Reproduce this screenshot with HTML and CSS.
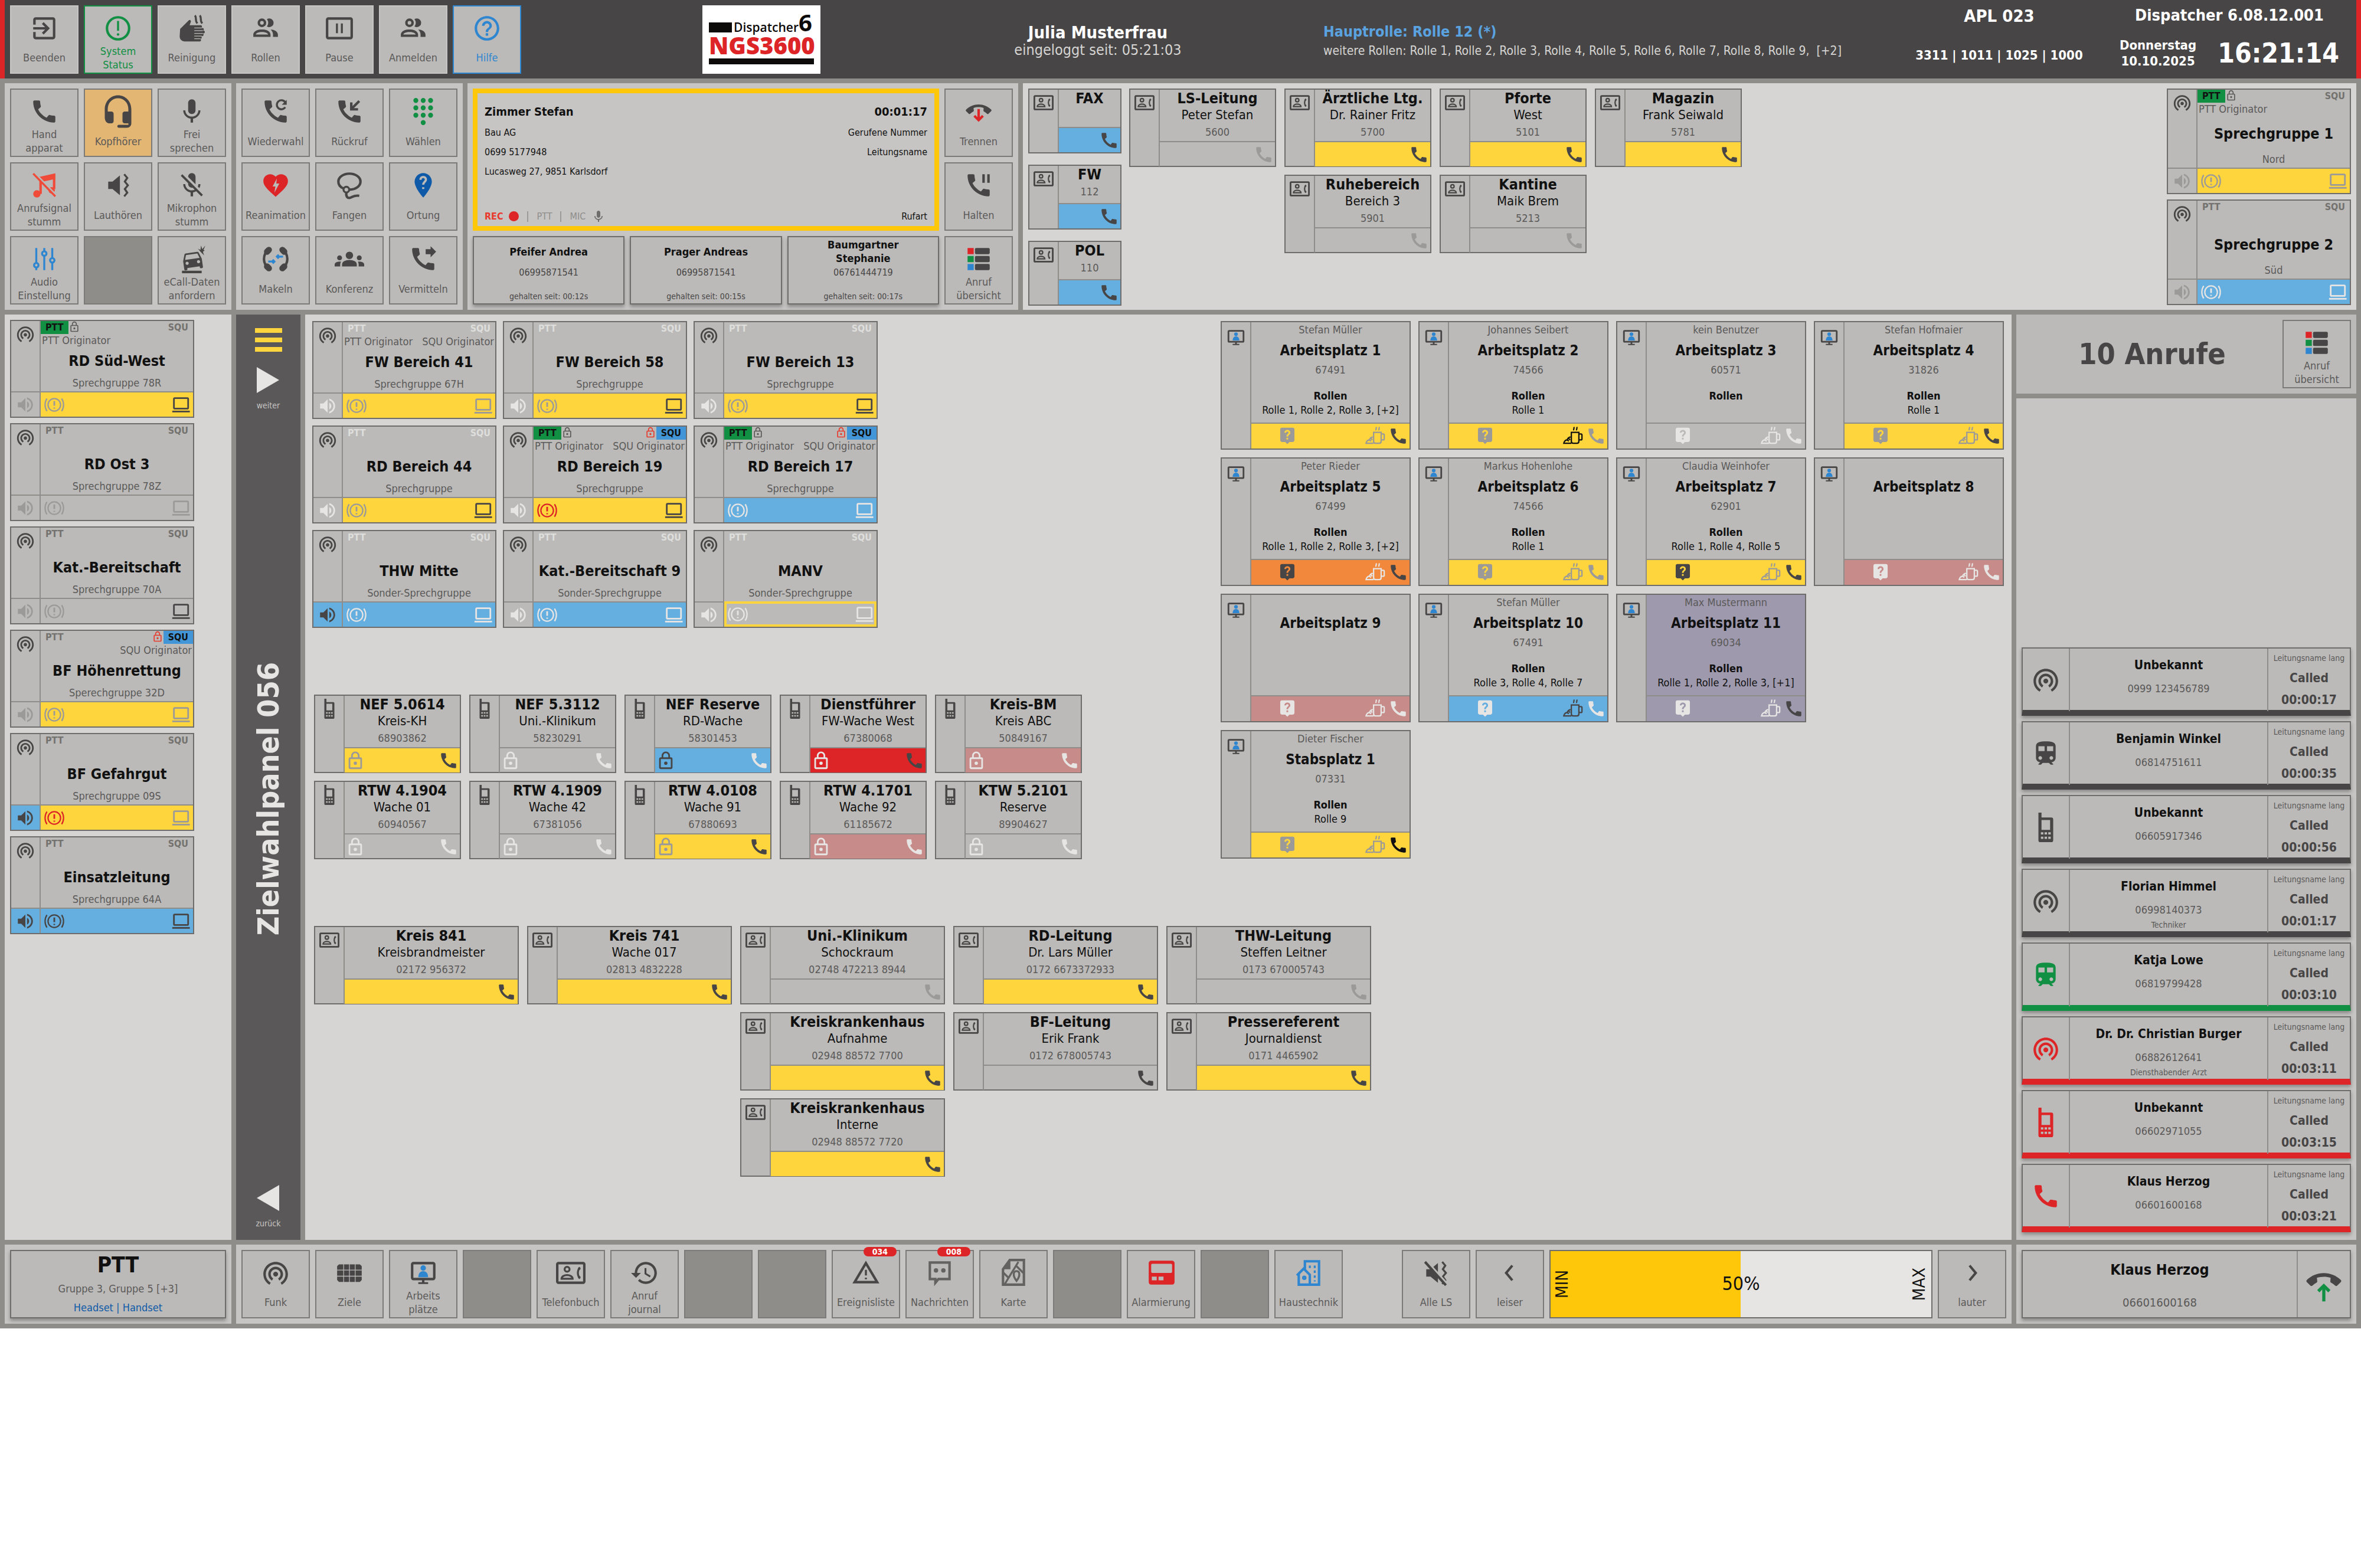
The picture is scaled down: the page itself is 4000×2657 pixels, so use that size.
FILE: index.html
```html
<!DOCTYPE html>
<html lang="de">
<head>
    <meta charset="utf-8">
    <title>Dispatcher NGS3600</title>
    <link rel="stylesheet" href="styles.css">
</head>
<body>
<!-- Symbole -->
<svg class="sprite" aria-hidden="true">
    <symbol id="i-exit" viewBox="0 0 24 24"><path d="M10.09 15.59L11.5 17l5-5-5-5-1.41 1.41L12.67 11H3v2h9.67l-2.58 2.59zM19 3H5c-1.11 0-2 .9-2 2v4h2V5h14v14H5v-4H3v4c0 1.1.89 2 2 2h14c1.1 0 2-.9 2-2V5c0-1.1-.9-2-2-2z"/></symbol>
    <symbol id="i-status" viewBox="0 0 24 24"><circle class="line" cx="12" cy="12" r="9"/><path class="line thin" d="M12 6v8"/><circle cx="12" cy="17" r="1"/></symbol>
    <symbol id="i-wash" viewBox="0 0 24 24"><path d="M2.5 12.5L9.500 5.500c.9-.8 2 .1 1.700 1.200L10.200 9.500h9a1.100 1.100 0 0 1 0 2.200h1.500a1.100 1.100 0 0 1 0 2.200h.8a1.100 1.100 0 0 1 0 2.200h-1a1.100 1.100 0 0 1 0 2.200h-1.500a1.100 1.100 0 0 1 0 2.200h-.6a1.100 1.100 0 0 1 0 2.200H6a4 4 0 0 1-3.900-4z"/><path class="gap" d="M14 11.700h6M14 13.900h7M14 16.100h7M14 18.300h6M14 20.500h5"/><path class="line thin" d="M14.500 1.500c2 2.500-.5 3.500 2 6.500M18.500 1.500c2 2.500-.5 3.500 2 6.500"/></symbol>
    <symbol id="i-people" viewBox="0 0 24 24"><path d="M13.070 10.410A5 5 0 0 0 13.070 4.590A3.390 3.390 0 0 1 15 4A3.500 3.500 0 0 1 15 11A3.390 3.390 0 0 1 13.070 10.410M5.500 7.500A3.500 3.500 0 1 1 9 11A3.500 3.500 0 0 1 5.500 7.500M7.500 7.500A1.500 1.500 0 1 0 9 6A1.500 1.500 0 0 0 7.500 7.500M16 17V19H2V17S2 13 9 13 16 17 16 17M14 17C13.860 16.220 12.670 15 9 15S4.070 16.310 4 17M15.950 13A5.320 5.320 0 0 1 18 17V19H22V17S22 13.370 15.940 13Z"/></symbol>
    <symbol id="i-pause" viewBox="0 0 24 24"><rect class="line" x="2" y="4" width="20" height="16" rx="1"/><path class="line thin" d="M10 8v8M14 8v8"/></symbol>
    <symbol id="i-help" viewBox="0 0 24 24"><path d="M11 18h2v-2h-2v2zm1-16C6.480 2 2 6.480 2 12s4.480 10 10 10 10-4.480 10-10S17.520 2 12 2zm0 18c-4.410 0-8-3.590-8-8s3.590-8 8-8 8 3.590 8 8-3.590 8-8 8zm0-14c-2.210 0-4 1.790-4 4h2c0-1.100.9-2 2-2s2 .9 2 2c0 2-3 1.750-3 5h2c0-2.250 3-2.500 3-5 0-2.210-1.790-4-4-4z"/></symbol>
    <symbol id="i-phone" viewBox="0 0 24 24"><path id="handset" d="M20.010 15.380c-1.230 0-2.420-.2-3.530-.56-.35-.12-.74-.03-1.010.24l-1.570 1.970c-2.830-1.350-5.480-3.900-6.890-6.830l1.950-1.660c.27-.28.35-.67.24-1.020-.37-1.110-.56-2.300-.56-3.530 0-.54-.45-.99-.99-.99H4.190C3.650 3 3 3.240 3 3.990 3 13.280 10.730 21 20.010 21c.71 0 .99-.63.99-1.180v-3.450c0-.54-.45-.99-.99-.99z"/></symbol>
    <symbol id="i-headset" viewBox="0 0 24 24"><path d="M12 1C7 1 3 5 3 10.500V16c0 2.300 1.300 4 3 4h1.500c.9 0 1.500-.7 1.500-1.500V13.500c0-.9-.7-1.500-1.500-1.500H5v-1.500C5 6 8.100 3 12 3s7 3 7 7.500V12h-2.500c-.9 0-1.500.7-1.500 1.500v5c0 .9.7 1.500 1.500 1.500H19v1h-6.500c-.6 0-1 .4-1 1s.4 1 1 1H18c1.700 0 3-1.300 3-3v-9.500C21 5 17 1 12 1z"/></symbol>
    <symbol id="i-mic" viewBox="0 0 24 24"><path d="M12 14c1.660 0 2.990-1.340 2.990-3L15 5c0-1.660-1.340-3-3-3S9 3.340 9 5v6c0 1.660 1.340 3 3 3zm5.300-3c0 3-2.540 5.100-5.300 5.100S6.700 14 6.700 11H5c0 3.410 2.720 6.230 6 6.720V21h2v-3.280c3.280-.48 6-3.300 6-6.720h-1.700z"/></symbol>
    <symbol id="i-micoff" viewBox="0 0 24 24"><path d="M19 11c0 1.190-.34 2.300-.9 3.280l-1.230-1.230c.27-.62.43-1.310.43-2.050H19m-4 .16L9 5.180V5a3 3 0 0 1 3-3 3 3 0 0 1 3 3v6.160M4.270 3L21 19.730 19.730 21l-4.190-4.190c-.77.46-1.630.77-2.540.91V21h-2v-3.280c-3.280-.49-6-3.310-6-6.720h1.700c0 3 2.540 5.100 5.300 5.100.81 0 1.600-.19 2.310-.52l-1.660-1.660L12 14a3 3 0 0 1-3-3v-.72L3 4.270 4.270 3z"/></symbol>
    <symbol id="i-ringoff" viewBox="0 0 24 24"><path class="line" d="M9 19V6l11-2.500V15"/><path d="M9 5.200l11.800-2.700v4.300L9 9.500z"/><circle cx="6" cy="19" r="3"/><circle cx="18" cy="16" r="2.600"/><path class="gap wide" d="M4 2l18 18.500"/><path class="line thin" d="M3 2.500l18 18.500"/></symbol>
    <symbol id="i-loud" viewBox="0 0 24 24"><path d="M4 9v6h3.500l6 5V4l-6 5z"/><path class="line thin" d="M17 3l2.500 3-2 3 2.500 3-2.500 3 2 3-2.500 3"/></symbol>
    <symbol id="i-loudoff" viewBox="0 0 24 24"><path d="M4 9v6h3.500l6 5V4l-6 5z"/><path class="line thin" d="M17 3l2.500 3-2 3 2.500 3-2.500 3 2 3-2.500 3"/><path class="gap wide" d="M4 2l18 20"/><path class="line" d="M3 3l17 19"/></symbol>
    <symbol id="i-sliders" viewBox="0 0 24 24"><path class="line thin" d="M5.500 3v12.200M5.500 18.800V21M12 3v2.700M12 9.300V21M18.500 3v8.200M18.500 14.800V21"/><circle class="line thin" cx="5.500" cy="17" r="1.800"/><circle class="line thin" cx="12" cy="7.500" r="1.800"/><circle class="line thin" cx="18.500" cy="13" r="1.800"/></symbol>
    <symbol id="i-ecall" viewBox="0 0 24 24"><g transform="translate(1 4) rotate(-8) scale(.85)"><path d="M18.920 6.010C18.720 5.420 18.160 5 17.500 5h-11c-.66 0-1.210.42-1.420 1.010L3 12v8c0 .55.45 1 1 1h1c.55 0 1-.45 1-1v-1h12v1c0 .55.45 1 1 1h1c.55 0 1-.45 1-1v-8l-2.080-5.990zM6.500 16c-.83 0-1.500-.67-1.500-1.500S5.670 13 6.500 13s1.500.67 1.500 1.500S7.330 16 6.500 16zm11 0c-.83 0-1.500-.67-1.500-1.500s.67-1.500 1.500-1.500 1.500.67 1.500 1.500-.67 1.500-1.500 1.500zM5 11l1.500-4.500h11L19 11H5z"/></g><path class="line" d="M4 22.500h16"/><path d="M17 3.500l2 1 .5-3.500 1 3L23 1l-1.500 3.500 1 .5-1.500 1 1 3-3-3z"/></symbol>
    <symbol id="i-redial" viewBox="0 0 24 24"><use href="#handset"/><path class="line thin" d="M19.800 8.500a3.700 3.700 0 1 1 0-4"/><path d="M21 2.500v4h-4z"/></symbol>
    <symbol id="i-callback" viewBox="0 0 24 24"><use href="#handset"/><path class="line" d="M20 3.500l-6 6"/><path class="line" d="M13.500 4.500V10.200H19"/></symbol>
    <symbol id="i-dial" viewBox="0 0 24 24"><path class="dots" d="M6 3h0M12 3h0M18 3h0M6 9h0M12 9h0M18 9h0M6 15h0M12 15h0M18 15h0M12 21h0"/></symbol>
    <symbol id="i-heart" viewBox="0 0 24 24"><path d="M12 21.350l-1.450-1.320C5.400 15.360 2 12.280 2 8.500 2 5.420 4.420 3 7.500 3c1.740 0 3.410.81 4.500 2.090C13.090 3.810 14.760 3 16.500 3 19.580 3 22 5.420 22 8.500c0 3.780-3.400 6.860-8.550 11.540L12 21.350z"/><path class="cut" d="M13 6.500l-3.500 6.500h2.300l-.8 5 4-7.500h-2.500z"/></symbol>
    <symbol id="i-lasso" viewBox="0 0 24 24"><path class="line" d="M7 14.500C4.500 13.400 3 11.500 3 9c0-3.600 4-6.500 9-6.500S21 5.400 21 9s-4 6.500-9 6.500"/><circle class="line thin" cx="9.500" cy="15.500" r="2.300"/><path class="line" d="M9.500 18c-.5 3 1 5 3.500 4s3-2 7-1.500"/></symbol>
    <symbol id="i-place" viewBox="0 0 24 24"><path d="M12 2C8.130 2 5 5.130 5 9c0 5.250 7 13 7 13s7-7.750 7-13c0-3.870-3.130-7-7-7z"/><path class="gap wide" d="M9.800 7.500c0-3.200 4.600-3 4.400 0-.1 1.700-2.200 1.800-2.200 4M12 13.500v1.500"/></symbol>
    <symbol id="i-swap" viewBox="0 0 24 24"><path class="line" d="M7 4C1 8 1 16 7 20M17 4c6 4 6 12 0 16"/><path class="fat" d="M5 6l1.500-1.500M5 18l1.500 1.500M19 6l-1.500-1.500M19 18l-1.500 1.500"/><path class="blue-line" d="M18 10h-5M14.500 8.500L13 10l1.500 1.500M6 14h5M9.500 12.500L11 14l-1.500 1.500"/></symbol>
    <symbol id="i-group" viewBox="0 0 24 24"><path d="M12 12.750c1.630 0 3.070.39 4.240.9 1.080.48 1.760 1.560 1.760 2.730V18H6v-1.610c0-1.180.68-2.260 1.760-2.730 1.170-.52 2.610-.91 4.240-.91zM4 13c1.100 0 2-.9 2-2s-.9-2-2-2-2 .9-2 2 .9 2 2 2zm1.130 1.100c-.37-.06-.74-.1-1.130-.1-.99 0-1.930.21-2.780.58C.48 14.900 0 15.620 0 16.430V18h4.500v-1.610c0-.83.23-1.610.63-2.290zM20 13c1.100 0 2-.9 2-2s-.9-2-2-2-2 .9-2 2 .9 2 2 2zm4 3.430c0-.81-.48-1.530-1.220-1.850-.85-.37-1.790-.58-2.780-.58-.39 0-.76.04-1.130.1.4.68.63 1.460.63 2.290V18H24v-1.570zM12 6c1.660 0 3 1.340 3 3s-1.340 3-3 3-3-1.340-3-3 1.340-3 3-3z"/></symbol>
    <symbol id="i-forward" viewBox="0 0 24 24"><use href="#handset"/><path d="M18 10.500l4.500-4.500L18 1.500V4h-4v4h4z"/></symbol>
    <symbol id="i-hangup" viewBox="0 0 24 24"><use href="#handset" transform="translate(12 11) rotate(135) scale(.85) translate(-12 -12)"/><path class="red-line" d="M12 10v9M8.500 15.500l3.500 3.500 3.500-3.500"/></symbol>
    <symbol id="i-pickup" viewBox="0 0 24 24"><use href="#handset" transform="translate(12 10) rotate(135) scale(.9) translate(-12 -12)"/><path class="green-line" d="M12 23V13M8.500 16.500L12 13l3.500 3.500"/></symbol>
    <symbol id="i-hold" viewBox="0 0 24 24"><use href="#handset"/><path d="M15 3h2v7h-2zM19 3h2v7h-2z"/></symbol>
    <symbol id="i-list" viewBox="0 0 24 24"><rect class="f-red" x="3" y="3" width="5" height="5"/><rect class="f-green" x="3" y="9.500" width="5" height="5"/><rect class="f-blue" x="3" y="16" width="5" height="5"/><rect x="9" y="3" width="12" height="5" rx="1"/><rect x="9" y="9.500" width="12" height="5" rx="1"/><rect x="9" y="16" width="12" height="5" rx="1"/></symbol>
    <symbol id="i-contact" viewBox="0 0 24 24"><rect class="line" x="1" y="4" width="22" height="16" rx="1"/><circle class="line thin" cx="9" cy="9" r="2"/><path class="line thin" d="M4.500 16.700c0-2 2.500-3 4.500-3s4.500 1 4.500 3z"/><path class="line thin" d="M19.500 7.500c-2.300 2.500-2.300 6.500 0 9"/><path class="line" d="M19.300 8l-.8 1M19.300 16l-.8-1"/></symbol>
    <symbol id="i-radio" viewBox="0 0 24 24"><path d="M12 11c-1.100 0-2 .9-2 2s.9 2 2 2 2-.9 2-2-.9-2-2-2zm6 2c0-3.310-2.690-6-6-6s-6 2.690-6 6c0 2.220 1.210 4.150 3 5.190l1-1.740c-1.190-.7-2-1.970-2-3.450 0-2.210 1.790-4 4-4s4 1.790 4 4c0 1.480-.81 2.750-2 3.450l1 1.740c1.790-1.040 3-2.970 3-5.190zM12 3C6.480 3 2 7.480 2 13c0 3.700 2.010 6.920 4.990 8.650l1-1.730C5.610 18.530 4 15.960 4 13c0-4.420 3.580-8 8-8s8 3.580 8 8c0 2.960-1.610 5.530-4 6.920l1 1.730c2.990-1.730 5-4.950 5-8.650 0-5.520-4.480-10-10-10z"/></symbol>
    <symbol id="i-grid" viewBox="0 0 24 24"><path d="M3.500 5H7v4.300H2V6.500zM7.600 5h4.100v4.300H7.600zM12.300 5h4.100v4.300h-4.100zM17 5h3.500L22 6.500v2.800h-5zM2 10h5v4.300H2zM7.600 10h4.100v4.300H7.600zM12.300 10h4.100v4.300h-4.100zM17 10h5v4.300h-5zM2 15h5v4.300H3.500L2 17.800zM7.600 15h4.100v4.300H7.600zM12.300 15h4.100v4.300h-4.100zM17 15h5v2.800l-1.500 1.500H17z"/></symbol>
    <symbol id="i-desk" viewBox="0 0 24 24"><rect class="line" x="3" y="4" width="18" height="13" rx="1"/><path d="M11 17h2v2.500h3V21H8v-1.500h3z"/><circle class="f-blue" cx="12" cy="8" r="2.200"/><path class="f-blue" d="M8 15.500c0-3 1.500-5 4-5s4 2 4 5z"/></symbol>
    <symbol id="i-history" viewBox="0 0 24 24"><path d="M13 3c-4.970 0-9 4.030-9 9H1l3.890 3.890.07.14L9 12H6c0-3.870 3.130-7 7-7s7 3.130 7 7-3.130 7-7 7c-1.930 0-3.680-.79-4.940-2.060l-1.420 1.420C8.270 19.990 10.510 21 13 21c4.970 0 9-4.030 9-9s-4.030-9-9-9zm-1 5v5l4.280 2.540.72-1.210-3.500-2.080V8H12z"/></symbol>
    <symbol id="i-warn" viewBox="0 0 24 24"><path class="line" d="M12 4L2.800 19.500h18.400z"/><path class="line thin" d="M12 9.500v4.500M12 15.800v1.400"/></symbol>
    <symbol id="i-chat" viewBox="0 0 24 24"><path class="line" d="M4 3.500h16V17h-9l-2.500 3v-3H4z"/><circle cx="9" cy="10" r="1.800"/><circle cx="15" cy="10" r="1.800"/></symbol>
    <symbol id="i-map" viewBox="0 0 24 24"><path class="line" d="M9 1.500h11.500v20H3.500V9z"/><path d="M9.500 1v8H3z"/><path class="line thin" d="M4 12l4 4-3 5M8 16l8-13M14 6l6 6"/><path class="line thin" d="M14.500 18.500c-3.500-4.500-2.500-8 0-8s3.500 3.500 0 8z"/></symbol>
    <symbol id="i-pager" viewBox="0 0 24 24"><path d="M4 2h17c1.100 0 2 .9 2 2v15.500c0 1.100-.9 2-2 2H4c-1.100 0-2-.9-2-2V4c0-1.100.9-2 2-2z"/><rect class="cut" x="4" y="4.500" width="17" height="7.500" rx="1"/><path class="cut" d="M4.500 15h4v3h-4zM10 15h4v3h-4z"/></symbol>
    <symbol id="i-house" viewBox="0 0 24 24"><path class="line" d="M9 10V2.500h11.500v19H4V12.500L2.500 14 8 8.500l5 5V21"/><path class="line thin dash" d="M13 6v3M17 6v13"/><circle class="line thin" cx="8.500" cy="16" r="1"/></symbol>
    <symbol id="i-left" viewBox="0 0 24 24"><path class="line" d="M14 6l-5 6 5 6"/></symbol>
    <symbol id="i-right" viewBox="0 0 24 24"><path class="line" d="M10 6l5 6-5 6"/></symbol>
    <symbol id="i-volume" viewBox="0 0 24 24"><path d="M3 9v6h4l5 5V4L7 9H3zm13.500 3c0-1.770-1.020-3.290-2.500-4.030v8.050c1.480-.73 2.500-2.250 2.500-4.020zM14 3.230v2.060c2.890.86 5 3.540 5 6.710s-2.110 5.850-5 6.710v2.060c4.010-.91 7-4.490 7-8.770s-2.990-7.860-7-8.770z"/></symbol>
    <symbol id="i-alarm" viewBox="0 0 24 24"><circle class="line thin" cx="12" cy="12" r="7.500"/><path class="line" d="M12 7.500v5.500M12 15.200v1.300"/><path class="line thin" d="M3.200 4.500c-3 4.500-3 10.500 0 15M20.800 4.500c3 4.500 3 10.500 0 15"/></symbol>
    <symbol id="i-laptop" viewBox="0 0 24 24"><rect class="line" x="4" y="4" width="17" height="12.500" rx="1"/><path class="line" d="M2 20h21"/></symbol>
    <symbol id="i-lock" viewBox="0 0 24 24"><path d="M12 17a2 2 0 0 0 2-2 2 2 0 0 0-2-2 2 2 0 0 0-2 2 2 2 0 0 0 2 2m6 3V10H6v10h12m0-12a2 2 0 0 1 2 2v10a2 2 0 0 1-2 2H6a2 2 0 0 1-2-2V10c0-1.110.9-2 2-2h1V6a5 5 0 0 1 10 0v2h1m-6-5a3 3 0 0 0-3 3v2h6V6a3 3 0 0 0-3-3z"/></symbol>
    <symbol id="i-cell" viewBox="0 0 24 24"><path fill-rule="evenodd" d="M6 0h2.500v4H16.500c1 0 1.500.6 1.500 1.500V22.500c0 1-.5 1.500-1.500 1.500H7.500C6.500 24 6 23.400 6 22.500zM8.500 6v8h7V6zM8 16v1.800h2V16zm3 0v1.800h2V16zm3 0v1.800h2V16zM8 19.500v1.800h2v-1.800zm3 0v1.800h2v-1.800zm3 0v1.800h2v-1.800z"/></symbol>
    <symbol id="i-bus" viewBox="0 0 24 24"><path d="M12 2c-4.420 0-8 .5-8 4v9.500C4 17.430 5.570 19 7.500 19L6 20.500v.5h2l1.500-1.500h5L16 21h2v-.5L16.500 19c1.930 0 3.500-1.570 3.500-3.500V6c0-3.500-3.580-4-8-4zM7.500 17c-.83 0-1.500-.67-1.500-1.500S6.670 14 7.500 14s1.500.67 1.500 1.500S8.330 17 7.500 17zm3.500-7H6V6h5v4zm5.500 7c-.83 0-1.500-.67-1.500-1.500s.67-1.500 1.500-1.500 1.500.67 1.500 1.500-.67 1.500-1.500 1.500zm1.500-7h-5V6h5v4z"/></symbol>
    <symbol id="i-ask" viewBox="0 0 24 24"><path fill-rule="evenodd" d="M5.500 2h13c1.100 0 2 .9 2 2v13c0 1.100-.9 2-2 2h-4L12 21.500 9.500 19h-4c-1.100 0-2-.9-2-2V4c0-1.100.9-2 2-2zM8.500 8h2c0-2 3-2 3 0 0 1.500-2.500 1.600-2.500 4.500h2c0-2 2.600-2.200 2.600-4.500 0-4.500-7.100-4.500-7.100 0zM11 14h2v2h-2z"/></symbol>
    <symbol id="i-cup" viewBox="0 0 24 24"><path class="line thin" d="M10 7.500h9v10.500c0 1.500-.8 2.500-2 2.500h-5c-1.200 0-2-1-2-2.500z"/><path class="line thin" d="M19 9.500h2.500c.8 0 1.200.5 1.200 1.200v4.600c0 .8-.4 1.200-1.200 1.200H19"/><path class="line thin" d="M13 5c-1-1.500 1-2 0-4M16.500 5c-1-1.500 1-2 0-4"/><path class="line thin" d="M9 13c-2 .5-3.500 2-4 3.500-2 .2-3.500 1.500-4 4h9"/><path class="line thin" d="M5 16.500l2 1.500M6.500 14.500l2 2"/></symbol>
</svg>

<header class="topbar">
    <nav class="keys" id="sessionKeys"></nav>
    <div class="brand">
        <div class="logo">
            <div class="logo-top"><i class="logo-block"></i><span class="logo-word">Dispatcher</span><b class="logo-six">6</b></div>
            <strong class="logo-name">NGS3600</strong>
            <i class="logo-bar"></i>
        </div>
    </div>
    <div class="user">
        <b class="user-name">Julia Musterfrau</b>
        <span class="user-since">eingeloggt seit: 05:21:03</span>
    </div>
    <div class="roles">
        <b class="role-main">Hauptrolle: Rolle 12 (*)</b>
        <span class="role-more">weitere Rollen: Rolle 1, Rolle 2, Rolle 3, Rolle 4, Rolle 5, Rolle 6, Rolle 7, Rolle 8, Rolle 9,&nbsp; [+2]</span>
    </div>
    <div class="station">
        <b class="station-name">APL 023</b>
        <b class="station-lines">3311 | 1011 | 1025 | 1000</b>
    </div>
    <div class="clock">
        <b class="version">Dispatcher 6.08.12.001</b>
        <div class="now">
            <b class="date">Donnerstag<br>10.10.2025</b>
            <b class="time">16:21:14</b>
        </div>
    </div>
</header>

<main class="console">
    <div class="row row-top">
        <section class="panel keys-grid" id="audioKeys"></section>
        <section class="panel keys-grid" id="callKeys"></section>
        <section class="panel talk">
            <div class="active-call">
                <div class="line-pair head"><b>Zimmer Stefan</b><b>00:01:17</b></div>
                <div class="line-pair"><span>Bau AG</span><span>Gerufene Nummer</span></div>
                <div class="line-pair"><span>0699 5177948</span><span>Leitungsname</span></div>
                <div class="line-pair"><span>Lucasweg 27, 9851 Karlsdorf</span></div>
                <div class="line-pair foot">
                    <span class="flags"><b class="rec">REC</b><i class="rec-dot"></i><i class="sep"></i>PTT<i class="sep"></i>MIC<svg class="icon tiny"><use href="#i-mic"/></svg></span>
                    <span>Rufart</span>
                </div>
            </div>
            <div class="talk-keys" id="talkKeys"></div>
            <div class="held" id="held"></div>
        </section>
        <section class="panel light quick">
            <div class="emergency" id="emergency"></div>
            <div class="tiles contacts-s" id="quickContacts"></div>
            <div class="tiles top-groups" id="topGroups"></div>
        </section>
    </div>

    <div class="row row-work">
        <section class="panel light side-groups"><div class="tiles" id="sideGroups"></div></section>
        <aside class="pager">
            <button class="burger" aria-label="Menü"><i></i><i></i><i></i></button>
            <button class="step"><svg class="arrow" viewBox="0 0 38 44"><path d="M0 0l38 22L0 44z"/></svg>weiter</button>
            <h2 class="pager-title">Zielwahlpanel 056</h2>
            <button class="step"><svg class="arrow" viewBox="0 0 38 44"><path d="M38 0v44L0 22z"/></svg>zurück</button>
        </aside>
        <section class="panel light canvas">
            <div class="tiles groups" id="groups"></div>
            <div class="tiles radios" id="radios"></div>
            <div class="tiles desks" id="desks"></div>
            <div class="tiles contacts" id="contacts"></div>
        </section>
        <aside class="queue">
            <div class="queue-head">
                <h2 class="queue-count">10 Anrufe</h2>
                <button class="key"><svg class="icon"><use href="#i-list"/></svg><span>Anruf<br>übersicht</span></button>
            </div>
            <ul class="panel calls" id="calls"></ul>
        </aside>
    </div>

    <div class="row row-bottom">
        <section class="panel">
            <div class="ptt">
                <b class="ptt-name">PTT</b>
                <span>Gruppe 3, Gruppe 5 [+3]</span>
                <span class="ptt-links"><a href="#headset">Headset</a> | <a href="#handset">Handset</a></span>
            </div>
        </section>
        <section class="panel tools">
            <nav class="keys" id="toolKeys"></nav>
            <div class="volume" id="volume">
                <button class="key"><svg class="icon"><use href="#i-loudoff"/></svg><span>Alle LS</span></button>
                <button class="key"><svg class="icon"><use href="#i-left"/></svg><span>leiser</span></button>
                <div class="slider">
                    <input type="range" id="level" min="0" max="100" value="50" aria-label="Lautstärke" style="--level: 50%">
                    <span class="slider-min">MIN</span>
                    <label class="slider-value" for="level">50%</label>
                    <span class="slider-max">MAX</span>
                </div>
                <button class="key"><svg class="icon"><use href="#i-right"/></svg><span>lauter</span></button>
            </div>
        </section>
        <section class="panel">
            <div class="next-call">
                <div class="next-text"><b>Klaus Herzog</b><span>06601600168</span></div>
                <button class="answer" aria-label="Annehmen"><svg class="icon big"><use href="#i-pickup"/></svg></button>
            </div>
        </section>
    </div>
</main>
<script src="app.js"></script>
</body>
</html>
```

FILE: styles.css
```css
* {
    box-sizing: border-box;
}

body {
    margin: 0;
    background: #fff;
    color: #111;
    font: 18px/23px "DejaVu Sans Condensed", "DejaVu Sans", "Noto Sans", sans-serif;
}

button {
    margin: 0;
    padding: 0;
    border: 0;
    background: none;
    color: inherit;
    font: inherit;
}

h2, ul {
    margin: 0;
    padding: 0;
}

i {
    display: block;
}

a {
    color: inherit;
    text-decoration: none;
}

/* Symbole */
.sprite {
    display: none;
}

.icon {
    display: block;
    flex: none;
    width: 50px;
    height: 50px;
    fill: currentColor;
}

.small { width: 34px; height: 34px; }
.tiny { width: 24px; height: 24px; }
.big { width: 64px; height: 64px; }

.line, .gap, .dots, .fat, .blue-line, .red-line, .green-line {
    fill: none;
    stroke: currentColor;
    stroke-width: 2px;
}

.thin { stroke-width: 1.6px; }
.dash { stroke-dasharray: 2 2; }
.gap { stroke: #bbbab8; stroke-width: 0.6px; }
.gap.wide { stroke-width: 1.8px; }
.dots { stroke-width: 4px; stroke-linecap: round; }
.fat { stroke-width: 5px; stroke-linecap: round; }
.blue-line { stroke: #2f86d0; stroke-width: 1.6px; }
.red-line { stroke: #dd2527; }
.green-line { stroke: #118f43; }
.cut { fill: #bbbab8; }
.f-red { fill: #dd2527; }
.f-green { fill: #118f43; }
.f-blue { fill: #2f86d0; }

.c-dark { color: #474545; }
.c-black { color: #111; }
.c-dim { color: #9b9a98; }
.c-light { color: #e6e5e3; }
.c-red { color: #dd2527; }
.c-green { color: #118f43; }

/* Kopfzeile */
.topbar {
    display: grid;
    grid-template-columns: 866px 814fr 326fr 1197fr 334fr 438fr;
    align-items: center;
    height: 133px;
    padding-left: 9px;
    border-left: 8px solid #dd2527;
    border-right: 8px solid #dd2527;
    background: #474545;
    color: #fff;
}

.keys {
    display: flex;
    gap: 9px;
}

.key {
    position: relative;
    display: flex;
    flex: none;
    flex-direction: column;
    align-items: center;
    width: 116px;
    height: 116px;
    padding-top: 12px;
    border: 2px solid #7b7a78;
    background: #bbbab8;
    color: #474545;
}

.key span {
    display: flex;
    align-items: center;
    height: 50px;
    text-align: center;
    color: #5a5958;
}

.key.blank { background: #8e8d8a; }
.key.marked { background: #e4b673; }
.key.marked .icon { width: 60px; height: 60px; margin: -5px 0; }
.topbar .key { border-color: #c6c5c3; }
.topbar .key.green, .key.green span { border-color: #118f43; color: #118f43; }
.topbar .key.blue, .key.blue span { border-color: #2f86d0; color: #2f86d0; }
.key.i-red .icon { color: #dd2527; }
.key.i-coral .icon { color: #f04a38; }
.key.i-green .icon, .key.green .icon { color: #118f43; }
.key.i-blue .icon, .key.blue .icon { color: #2f86d0; }
.key.i-navy .icon { color: #0f5aa8; }
.key.i-gray .icon { color: #636261; }

.key .badge {
    position: absolute;
    top: -7px;
    right: 4px;
    display: block;
    width: 56px;
    height: 16px;
    border-radius: 8px;
    background: #dd2527;
    color: #fff;
    font-size: 14px;
    font-weight: bold;
    line-height: 16px;
}

.brand {
    display: flex;
    justify-content: center;
}

.logo {
    width: 200px;
    height: 116px;
    padding: 12px 11px 0;
    background: #fff;
    color: #0d0a0a;
    font-family: "Open Sans", "Noto Sans", sans-serif;
}

.logo-top {
    display: flex;
    align-items: flex-end;
    height: 34px;
}

.logo-block {
    width: 39px;
    height: 17px;
    background: #0d0a0a;
}

.logo-word {
    padding-left: 3px;
    font-size: 21px;
    font-weight: 600;
    line-height: 17px;
}

.logo-six {
    font-size: 40px;
    line-height: 34px;
}

.logo-name {
    display: block;
    color: #dd2527;
    font-size: 40px;
    font-weight: 800;
    line-height: 44px;
}

.logo-bar {
    height: 10px;
    background: #0d0a0a;
}

.user, .roles {
    display: flex;
    flex-direction: column;
    padding-top: 6px;
}

.user {
    align-items: center;
    line-height: 30px;
    white-space: nowrap;
}

.user-name { font-size: 29px; }
.user-since { color: #d6d5d3; font-size: 25px; }

.roles {
    padding-left: 219px;
    line-height: 32px;
    white-space: nowrap;
}

.role-main { color: #5aa3e0; font-size: 25px; }
.role-more { color: #d6d5d3; font-size: 21px; }

.station, .clock {
    display: flex;
    flex-direction: column;
    align-items: center;
    line-height: 27px;
}

.station { gap: 39px; padding-bottom: 13px; }
.station-name { font-size: 29px; }
.station-lines { font-size: 22px; }

.clock { padding: 0 0 4px 8px; }
.version { font-size: 27px; }

.now {
    display: flex;
    align-items: center;
    gap: 36px;
    margin-top: 24px;
}

.date { font-size: 22px; text-align: center; }
.time { font-size: 46px; }

/* Grundraster */
.console {
    display: flex;
    flex-direction: column;
    gap: 8px;
    padding: 8px;
    background: #8e8d8a;
}

.row {
    display: grid;
    gap: 8px;
}

.row-top { grid-template-columns: 384px 384px 933fr 2259fr; }
.row-work { grid-template-columns: 384px 109px 1fr 576px; min-height: 59vh; }
.row-bottom { grid-template-columns: 384px 1fr 576px; }

.panel {
    min-width: 0;
    padding: 9px;
    background: #c6c5c3;
}

.panel.light { background: #d6d5d3; }

.keys-grid {
    display: grid;
    grid-template-columns: repeat(3, 116px);
    gap: 9px;
}

/* Aktives Gespräch */
.talk {
    display: grid;
    grid-template-columns: 1fr 116px;
    gap: 9px;
}

.active-call {
    display: flex;
    flex-direction: column;
    height: 241px;
    padding: 12px 12px 0;
    border: 8px solid #ffc709;
    font-size: 16px;
    line-height: 33px;
}

.line-pair {
    display: flex;
    justify-content: space-between;
}

.line-pair.head { font-size: 20px; line-height: 38px; }
.line-pair.foot { margin-top: auto; }

.flags {
    display: flex;
    align-items: center;
    gap: 10px;
    color: #8e8d8a;
}

.rec { color: #e8392c; }
.rec-dot { width: 17px; height: 17px; border-radius: 50%; background: #dd2527; }
.sep { width: 2px; height: 18px; margin: 0 4px; background: #9b9a98; }
.flags .icon { color: #6e6d6b; }

.talk-keys {
    display: flex;
    flex-direction: column;
    grid-row: 1 / 3;
    grid-column: 2;
    gap: 9px;
}

.held {
    display: grid;
    grid-template-columns: repeat(3, 1fr);
    gap: 9px;
}

.held-call, .ptt, .next-call, .call {
    border: 2px solid #6e6d6b;
    background: #bbbab8;
    box-shadow: 0 4px 6px rgba(0, 0, 0, 0.3);
}

.held-call {
    display: flex;
    flex-direction: column;
    height: 116px;
    text-align: center;
    color: #474545;
    font-size: 16px;
}

.held-call b {
    display: flex;
    align-items: center;
    justify-content: center;
    height: 48px;
    padding: 0 50px;
    color: #111;
    font-size: 18px;
}

.held-call small { margin-top: auto; font-size: 14px; }

/* Kacheln */
.panel.quick {
    display: flex;
    align-items: flex-start;
    padding-bottom: 0;
}

.emergency {
    display: grid;
    grid-template-columns: 158px;
    grid-auto-rows: 110px;
    gap: 19px;
}

.tiles {
    display: grid;
    align-content: start;
}

.contacts-s {
    grid-template-columns: repeat(4, 249px);
    grid-auto-rows: 133px;
    gap: 13px 14px;
    margin-left: 13px;
}

.top-groups {
    grid-template-columns: 312px;
    grid-auto-rows: 179px;
    gap: 9px;
    margin-left: auto;
}

.side-groups .tiles {
    grid-template-columns: 312px;
    grid-auto-rows: 166px;
    gap: 9px;
}

.canvas {
    display: grid;
    grid-template-areas: "groups desks" "radios desks" "contacts contacts";
    grid-template-rows: auto auto 1fr;
    justify-content: space-between;
    row-gap: 113px;
    padding: 11px 13px 11px 12px;
}

.groups {
    grid-area: groups;
    grid-template-columns: repeat(3, 312px);
    grid-auto-rows: 166px;
    gap: 11px;
}

.radios {
    grid-area: radios;
    grid-template-columns: repeat(5, 249px);
    grid-auto-rows: 133px;
    gap: 13px 14px;
    padding-left: 3px;
}

.desks {
    grid-area: desks;
    grid-template-columns: repeat(4, 322px);
    grid-auto-rows: 218px;
    gap: 13px;
}

.contacts {
    grid-area: contacts;
    grid-template-columns: repeat(5, 347px);
    grid-auto-rows: 133px;
    gap: 13px 14px;
    padding-left: 3px;
}

.col-2 { grid-column-start: 2; }
.col-3 { grid-column-start: 3; }

.tile {
    display: grid;
    grid-template-columns: 50px 1fr;
    grid-template-rows: 1fr 43px;
    border: 2px solid #6e6d6b;
    background: #bbbab8;
}

.tile-side {
    display: flex;
    justify-content: center;
    grid-row: 1 / 3;
    padding-top: 5px;
    border-right: 2px solid #8e8d8a;
    color: #474545;
}

.tile-body {
    display: flex;
    flex-direction: column;
    min-width: 0;
    text-align: center;
    white-space: nowrap;
}

.tile-body b { font-size: 25px; line-height: 29px; }
.tile-body em { font-size: 22px; font-style: normal; line-height: 28px; }
.tile-body span { color: #5a5958; line-height: 30px; }

.tile-bar {
    display: flex;
    grid-column: 2;
    align-items: center;
    padding: 0 2px 0 1px;
    border-top: 2px solid #8e8d8a;
}

.tile-bar button:last-child { margin-left: auto; }

.bar-yellow { background: #ffd53d; }
.bar-blue { background: #65aee0; }
.bar-red { background: #dd2527; }
.bar-pink { background: #c78c8a; }
.bar-orange { background: #f2883c; }
.bar-outline { border: 4px solid #ffd53d; }

.group .tile-side { grid-row: 1; }
.group .tile-bar { padding: 0 4px 0 6px; }
.group .tile-bar.bar-outline { padding: 0 0 0 2px; }

.tile-speaker {
    display: flex;
    grid-column: 1;
    align-items: center;
    justify-content: center;
    border-top: 2px solid #8e8d8a;
    border-right: 2px solid #8e8d8a;
}

.tile-speaker.on { background: #65aee0; }

.tags, .origins {
    display: flex;
    flex: none;
    height: 22px;
}

.tags { color: #73726f; font-size: 16px; font-weight: bold; }
.tags .tag { padding: 0 8px; color: inherit; line-height: 22px; }
.groups .tags { color: #dededc; }
.tags .tag.ptt-on { background: #118f43; color: #111; }
.tags .tag.squ-on { background: #4296d8; color: #111; }
.tags .icon { width: 20px; height: 20px; color: #5a5958; }
.tags .squ-lock { color: #e8392c; }
.tags .push { margin-left: auto; }

.origins { justify-content: space-between; padding: 0 2px; }
.origins span { line-height: 22px; }

.group .tile-body b {
    display: flex;
    flex: 1;
    align-items: center;
    justify-content: center;
}

.group .tile-body .sub { line-height: 28px; }

.desk { grid-template-rows: 1fr 44px; }
.desk .tile-side { padding-top: 9px; }
.desk .tile-body b { height: 44px; font-size: 24px; line-height: 44px; }
.desk .tile-body .desk-user { height: 26px; line-height: 26px; }
.desk .tile-body .desk-no { height: 43px; line-height: 22px; }
.desk .tile-body strong { line-height: 24px; }
.desk .tile-body .desk-roles { color: #111; line-height: 24px; }
.desk .tile-bar { gap: 5px; padding-left: 44px; }
.desk .tile-bar button:nth-child(2) { margin-left: auto; }
.desk .tile-bar button:last-child { margin-left: 0; }
.violet .tile-body, .violet .tile-bar { background: #9f99ae; }

/* Zielwahlpanel */
.pager {
    display: flex;
    flex-direction: column;
    align-items: center;
    padding: 23px 0 16px;
    background: #5a5859;
    color: #e6e5e3;
}

.burger {
    display: grid;
    gap: 8px;
    margin-bottom: 26px;
}

.burger i { width: 46px; height: 8px; background: #ffd53d; }

.step {
    display: grid;
    justify-items: center;
    gap: 10px;
    color: #c6c5c3;
    font-size: 14px;
}

.arrow { width: 38px; height: 44px; fill: #e6e5e3; }

.pager-title {
    margin: auto 0;
    font-size: 50px;
    line-height: 60px;
    writing-mode: vertical-rl;
    transform: rotate(180deg);
}

/* Anrufliste */
.queue {
    display: flex;
    flex-direction: column;
    gap: 8px;
}

.queue-head {
    display: flex;
    align-items: center;
    padding: 9px;
    background: #bbbab8;
}

.queue-count {
    flex: 1;
    color: #474545;
    font-size: 50px;
    line-height: 60px;
    text-align: center;
}

.calls {
    display: flex;
    flex: 1;
    flex-direction: column;
    justify-content: flex-end;
    gap: 9px;
    padding-bottom: 13px;
    list-style: none;
}

.call {
    display: grid;
    grid-template-columns: 78px 1fr 140px;
    height: 116px;
    border-bottom: 10px solid #474545;
    text-align: center;
}

.call.green { border-bottom-color: #118f43; }
.call.red { border-bottom-color: #dd2527; }

.call-icon {
    display: flex;
    align-items: center;
    justify-content: center;
    color: #474545;
}

.call.green .call-icon { color: #118f43; }
.call.red .call-icon { color: #dd2527; }

.call-who, .call-time {
    display: flex;
    flex-direction: column;
    border-left: 2px solid #8e8d8a;
    color: #5a5958;
    font-size: 18px;
}

.call-who { padding-top: 7px; line-height: 38px; }
.call-who b { color: #111; font-size: 21px; line-height: 42px; }
.call-who small { font-size: 14px; line-height: 12px; }
.call-time small { font-size: 14px; line-height: 32px; }
.call-time b { color: #474545; font-size: 21px; line-height: 37px; }

/* Fußzeile */
.ptt {
    display: flex;
    flex-direction: column;
    align-items: center;
    height: 116px;
    color: #5a5958;
    line-height: 32px;
}

.ptt-name { color: #111; font-size: 37px; line-height: 48px; }
.ptt-links { color: #0f5aa8; }

.tools {
    display: flex;
    gap: 100px;
}

.volume {
    display: flex;
    flex: 1;
    gap: 9px;
}

.slider {
    display: grid;
    flex: 1;
    grid-template-columns: 40px 1fr 40px;
    align-items: center;
    justify-items: center;
    height: 116px;
    border: 2px solid #6e6d6b;
}

.slider input {
    grid-row: 1;
    grid-column: 1 / 4;
    width: 100%;
    height: 112px;
    margin: 0;
    appearance: none;
    background: linear-gradient(to right, #ffc709 var(--level), #e6e5e3 var(--level));
}

.slider input::-webkit-slider-thumb {
    appearance: none;
    width: 1px;
    height: 1px;
}

.slider-min, .slider-max, .slider-value {
    z-index: 1;
    grid-row: 1;
    pointer-events: none;
}

.slider-min, .slider-max {
    font-size: 28px;
    line-height: 36px;
    writing-mode: vertical-rl;
    transform: rotate(180deg);
}

.slider-min { grid-column: 1; }
.slider-value { grid-column: 2; font-size: 32px; }
.slider-max { grid-column: 3; }

.next-call {
    display: grid;
    grid-template-columns: 1fr 90px;
    height: 116px;
}

.next-text {
    display: flex;
    flex-direction: column;
    align-items: center;
    color: #5a5958;
    font-size: 20px;
    line-height: 46px;
}

.next-text b { color: #111; font-size: 25px; line-height: 64px; }

.answer {
    display: flex;
    align-items: center;
    justify-content: center;
    border-left: 2px solid #8e8d8a;
    color: #474545;
}
```

FILE: app.js
```js
function icon(name, cls) {
    return '<svg class="icon ' + (cls || '') + '"><use href="#i-' + name + '"/></svg>';
}

function fill(id, list, render) {
    document.getElementById(id).innerHTML = list.map(render).join('');
}

// Taste: [Symbol, Text, Klasse, Zähler]
function key(k) {
    if (!k) {
        return '<button class="key blank" aria-label="frei" disabled></button>';
    }
    return '<button class="key ' + (k[2] || '') + '">' + icon(k[0]) + '<span>' + k[1] + '</span>' +
        (k[3] ? '<span class="badge"><b>' + k[3] + '</b></span>' : '') + '</button>';
}

function action(name, color, label) {
    return '<button aria-label="' + label + '">' + icon(name, 'small c-' + color) + '</button>';
}

// Telefonkachel: [Name, Zusatz, Nummer, Balken, Hörerfarbe, Klasse]
function phoneTile(t) {
    return '<article class="tile ' + (t[5] || '') + '"><div class="tile-side">' + icon('contact', 'small') + '</div>' +
        '<div class="tile-body"><b>' + t[0] + '</b>' + (t[1] === null ? '' : '<em>' + t[1] + '</em>') +
        '<span>' + t[2] + '</span></div>' +
        '<div class="tile-bar bar-' + t[3] + '">' + action('phone', t[4], 'Anrufen') + '</div></article>';
}

// Funkgerät: [Name, Zusatz, Nummer, Balken, Schlossfarbe, Hörerfarbe]
function radioTile(t) {
    return '<article class="tile"><div class="tile-side">' + icon('cell', 'small') + '</div>' +
        '<div class="tile-body"><b>' + t[0] + '</b><em>' + t[1] + '</em><span>' + t[2] + '</span></div>' +
        '<div class="tile-bar bar-' + t[3] + '">' + action('lock', t[4], 'Sperren') +
        action('phone', t[5], 'Anrufen') + '</div></article>';
}

// Sprechgruppe: [Name, Zusatz, Balken, Lautsprecher, Alarm, Laptop, Merkmale]
// Merkmale: P = PTT belegt, p = PTT Originator, S = SQU belegt, s = SQU Originator
function groupTile(g) {
    var f = g[6] || '';
    var has = function (c) { return f.indexOf(c) >= 0; };
    return '<article class="tile group"><div class="tile-side">' + icon('radio', 'small') + '</div>' +
        '<div class="tile-body"><div class="tags">' +
        '<span class="tag ' + (has('P') ? 'ptt-on' : '') + '">PTT</span>' + (has('P') ? icon('lock') : '') +
        '<i class="push"></i>' + (has('S') ? icon('lock', 'squ-lock') : '') +
        '<span class="tag ' + (has('S') ? 'squ-on' : '') + '">SQU</span></div>' +
        '<div class="origins"><span>' + (has('p') ? 'PTT Originator' : '') + '</span><span>' +
        (has('s') ? 'SQU Originator' : '') + '</span></div>' +
        '<b>' + g[0] + '</b><span class="sub">' + g[1] + '</span></div>' +
        '<div class="tile-speaker ' + (g[3] === 'dark' ? 'on' : '') + '">' + (g[3] ? action('volume', g[3], 'Lautsprecher') : '') + '</div>' +
        '<div class="tile-bar bar-' + g[2] + '">' + action('alarm', g[4], 'Notruf') +
        action('laptop', g[5], 'Arbeitsplatz') + '</div></article>';
}

// Arbeitsplatz: [Benutzer, Name, Nummer, Rollen, Balken, Frage, Pause, Hörer, Klasse]
function deskTile(d) {
    return '<article class="tile desk ' + (d[8] || '') + '"><div class="tile-side">' + icon('desk', 'small') + '</div>' +
        '<div class="tile-body"><span class="desk-user">' + d[0] + '</span><b>' + d[1] + '</b>' +
        '<span class="desk-no">' + d[2] + '</span>' + (d[2] ? '<strong>Rollen</strong>' : '') +
        '<span class="desk-roles">' + d[3] + '</span></div>' +
        '<div class="tile-bar bar-' + d[4] + '">' + action('ask', d[5], 'Frage') + action('cup', d[6], 'Pause') +
        action('phone', d[7], 'Anrufen') + '</div></article>';
}

fill('sessionKeys', [
    ['exit', 'Beenden'],
    ['status', 'System<br>Status', 'green'],
    ['wash', 'Reinigung'],
    ['people', 'Rollen'],
    ['pause', 'Pause'],
    ['people', 'Anmelden'],
    ['help', 'Hilfe', 'blue']
], key);

fill('audioKeys', [
    ['phone', 'Hand<br>apparat'],
    ['headset', 'Kopfhörer', 'marked'],
    ['mic', 'Frei<br>sprechen'],
    ['ringoff', 'Anrufsignal<br>stumm', 'i-coral'],
    ['loud', 'Lauthören'],
    ['micoff', 'Mikrophon<br>stumm'],
    ['sliders', 'Audio<br>Einstellung', 'i-blue'],
    null,
    ['ecall', 'eCall-Daten<br>anfordern']
], key);

fill('callKeys', [
    ['redial', 'Wiederwahl'],
    ['callback', 'Rückruf'],
    ['dial', 'Wählen', 'i-green'],
    ['heart', 'Reanimation', 'i-red'],
    ['lasso', 'Fangen'],
    ['place', 'Ortung', 'i-navy'],
    ['swap', 'Makeln'],
    ['group', 'Konferenz'],
    ['forward', 'Vermitteln']
], key);

fill('talkKeys', [
    ['hangup', 'Trennen'],
    ['hold', 'Halten'],
    ['list', 'Anruf<br>übersicht']
], key);

fill('toolKeys', [
    ['radio', 'Funk'],
    ['grid', 'Ziele'],
    ['desk', 'Arbeits<br>plätze'],
    null,
    ['contact', 'Telefonbuch'],
    ['history', 'Anruf<br>journal'],
    null,
    null,
    ['warn', 'Ereignisliste', '', '034'],
    ['chat', 'Nachrichten', 'i-gray', '008'],
    ['map', 'Karte', 'i-gray'],
    null,
    ['pager', 'Alarmierung', 'i-red'],
    null,
    ['house', 'Haustechnik', 'i-blue']
], key);

fill('held', [
    ['Pfeifer Andrea', '06995871541', '00:12s'],
    ['Prager Andreas', '06995871541', '00:15s'],
    ['Baumgartner Stephanie', '06761444719', '00:17s']
], function (h) {
    return '<article class="held-call"><b>' + h[0] + '</b><span>' + h[1] + '</span><small>gehalten seit: ' + h[2] + '</small></article>';
});

fill('emergency', [
    ['FAX', null, '', 'blue', 'dark'],
    ['FW', null, '112', 'blue', 'dark'],
    ['POL', null, '110', 'blue', 'dark']
], phoneTile);

fill('quickContacts', [
    ['LS-Leitung', 'Peter Stefan', '5600', 'none', 'dim'],
    ['Ärztliche Ltg.', 'Dr. Rainer Fritz', '5700', 'yellow', 'dark'],
    ['Pforte', 'West', '5101', 'yellow', 'dark'],
    ['Magazin', 'Frank Seiwald', '5781', 'yellow', 'dark'],
    ['Ruhebereich', 'Bereich 3', '5901', 'none', 'dim', 'col-2'],
    ['Kantine', 'Maik Brem', '5213', 'none', 'dim']
], phoneTile);

fill('topGroups', [
    ['Sprechgruppe 1', 'Nord', 'yellow', 'dim', 'dim', 'dim', 'Pp'],
    ['Sprechgruppe 2', 'Süd', 'blue', 'dim', 'light', 'light']
], groupTile);

fill('sideGroups', [
    ['RD Süd-West', 'Sprechgruppe 78R', 'yellow', 'dim', 'dim', 'dark', 'Pp'],
    ['RD Ost 3', 'Sprechgruppe 78Z', 'none', 'dim', 'dim', 'dim'],
    ['Kat.-Bereitschaft', 'Sprechgruppe 70A', 'none', 'dim', 'dim', 'dark'],
    ['BF Höhenrettung', 'Sperechgruppe 32D', 'yellow', 'dim', 'dim', 'dim', 'Ss'],
    ['BF Gefahrgut', 'Sprechgruppe 09S', 'yellow', 'dark', 'red', 'dim'],
    ['Einsatzleitung', 'Sprechgruppe 64A', 'blue', 'dark', 'dark', 'dark']
], groupTile);

fill('groups', [
    ['FW Bereich 41', 'Sprechgruppe 67H', 'yellow', 'light', 'dim', 'dim', 'ps'],
    ['FW Bereich 58', 'Sprechgruppe', 'yellow', 'light', 'dim', 'dark'],
    ['FW Bereich 13', 'Sprechgruppe', 'yellow', 'light', 'dim', 'dark'],
    ['RD Bereich 44', 'Sprechgruppe', 'yellow', 'light', 'dim', 'dark'],
    ['RD Bereich 19', 'Sprechgruppe', 'yellow', 'light', 'red', 'dark', 'PpSs'],
    ['RD Bereich 17', 'Sprechgruppe', 'blue', '', 'light', 'light', 'PpSs'],
    ['THW Mitte', 'Sonder-Sprechgruppe', 'blue', 'dark', 'light', 'light'],
    ['Kat.-Bereitschaft 9', 'Sonder-Sprechgruppe', 'blue', 'light', 'light', 'light'],
    ['MANV', 'Sonder-Sprechgruppe', 'outline', 'light', 'light', 'light']
], groupTile);

fill('radios', [
    ['NEF 5.0614', 'Kreis-KH', '68903862', 'yellow', 'dim', 'dark'],
    ['NEF 5.3112', 'Uni.-Klinikum', '58230291', 'none', 'light', 'light'],
    ['NEF Reserve', 'RD-Wache', '58301453', 'blue', 'dark', 'light'],
    ['Dienstführer', 'FW-Wache West', '67380068', 'red', 'light', 'dark'],
    ['Kreis-BM', 'Kreis ABC', '50849167', 'pink', 'light', 'light'],
    ['RTW 4.1904', 'Wache 01', '60940567', 'none', 'light', 'light'],
    ['RTW 4.1909', 'Wache 42', '67381056', 'none', 'light', 'light'],
    ['RTW 4.0108', 'Wache 91', '67880693', 'yellow', 'dim', 'dark'],
    ['RTW 4.1701', 'Wache 92', '61185672', 'pink', 'light', 'light'],
    ['KTW 5.2101', 'Reserve', '89904627', 'none', 'light', 'light']
], radioTile);

fill('contacts', [
    ['Kreis 841', 'Kreisbrandmeister', '02172 956372', 'yellow', 'dark'],
    ['Kreis 741', 'Wache 017', '02813 4832228', 'yellow', 'dark'],
    ['Uni.-Klinikum', 'Schockraum', '02748 472213 8944', 'none', 'dim'],
    ['RD-Leitung', 'Dr. Lars Müller', '0172 6673372933', 'yellow', 'dark'],
    ['THW-Leitung', 'Steffen Leitner', '0173 670005743', 'none', 'dim'],
    ['Kreiskrankenhaus', 'Aufnahme', '02948 88572 7700', 'yellow', 'dark', 'col-3'],
    ['BF-Leitung', 'Erik Frank', '0172 678005743', 'none', 'dark'],
    ['Pressereferent', 'Journaldienst', '0171 4465902', 'yellow', 'dark'],
    ['Kreiskrankenhaus', 'Interne', '02948 88572 7720', 'yellow', 'dark', 'col-3']
], phoneTile);

fill('desks', [
    ['Stefan Müller', 'Arbeitsplatz 1', '67491', 'Rolle 1, Rolle 2, Rolle 3, [+2]', 'yellow', 'dim', 'dim', 'dark'],
    ['Johannes Seibert', 'Arbeitsplatz 2', '74566', 'Rolle 1', 'yellow', 'dim', 'black', 'dim'],
    ['kein Benutzer', 'Arbeitsplatz 3', '60571', '', 'none', 'light', 'light', 'light'],
    ['Stefan Hofmaier', 'Arbeitsplatz 4', '31826', 'Rolle 1', 'yellow', 'dim', 'dim', 'dark'],
    ['Peter Rieder', 'Arbeitsplatz 5', '67499', 'Rolle 1, Rolle 2, Rolle 3, [+2]', 'orange', 'dark', 'light', 'dark'],
    ['Markus Hohenlohe', 'Arbeitsplatz 6', '74566', 'Rolle 1', 'yellow', 'dim', 'dim', 'dim'],
    ['Claudia Weinhofer', 'Arbeitsplatz 7', '62901', 'Rolle 1, Rolle 4, Rolle 5', 'yellow', 'dark', 'dim', 'dark'],
    ['', 'Arbeitsplatz 8', '', '', 'pink', 'light', 'light', 'light'],
    ['', 'Arbeitsplatz 9', '', '', 'pink', 'light', 'light', 'light'],
    ['Stefan Müller', 'Arbeitsplatz 10', '67491', 'Rolle 3, Rolle 4, Rolle 7', 'blue', 'light', 'dark', 'light'],
    ['Max Mustermann', 'Arbeitsplatz 11', '69034', 'Rolle 1, Rolle 2, Rolle 3, [+1]', 'none', 'light', 'light', 'dark', 'violet'],
    null,
    ['Dieter Fischer', 'Stabsplatz 1', '07331', 'Rolle 9', 'yellow', 'dim', 'dim', 'black']
], function (d) {
    // null = freier Platz im Raster
    return d ? deskTile(d) : '<div></div>';
});

fill('calls', [
    ['radio', 'Unbekannt', '0999 123456789', '', '00:00:17', ''],
    ['bus', 'Benjamin Winkel', '06814751611', '', '00:00:35', ''],
    ['cell', 'Unbekannt', '06605917346', '', '00:00:56', ''],
    ['radio', 'Florian Himmel', '06998140373', 'Techniker', '00:01:17', ''],
    ['bus', 'Katja Lowe', '06819799428', '', '00:03:10', 'green'],
    ['radio', 'Dr. Dr. Christian Burger', '06882612641', 'Diensthabender Arzt', '00:03:11', 'red'],
    ['cell', 'Unbekannt', '06602971055', '', '00:03:15', 'red'],
    ['phone', 'Klaus Herzog', '06601600168', '', '00:03:21', 'red']
], function (c) {
    return '<li class="call ' + c[5] + '"><div class="call-icon">' + icon(c[0]) + '</div>' +
        '<div class="call-who"><b>' + c[1] + '</b><span>' + c[2] + '</span><small>' + c[3] + '</small></div>' +
        '<div class="call-time"><small>Leitungsname lang</small><b>Called</b><b>' + c[4] + '</b></div></li>';
});

// Lautstärke
var level = document.getElementById('level');
level.addEventListener('input', function () {
    level.style.setProperty('--level', level.value + '%');
    document.querySelector('.slider-value').textContent = level.value + '%';
});
```
